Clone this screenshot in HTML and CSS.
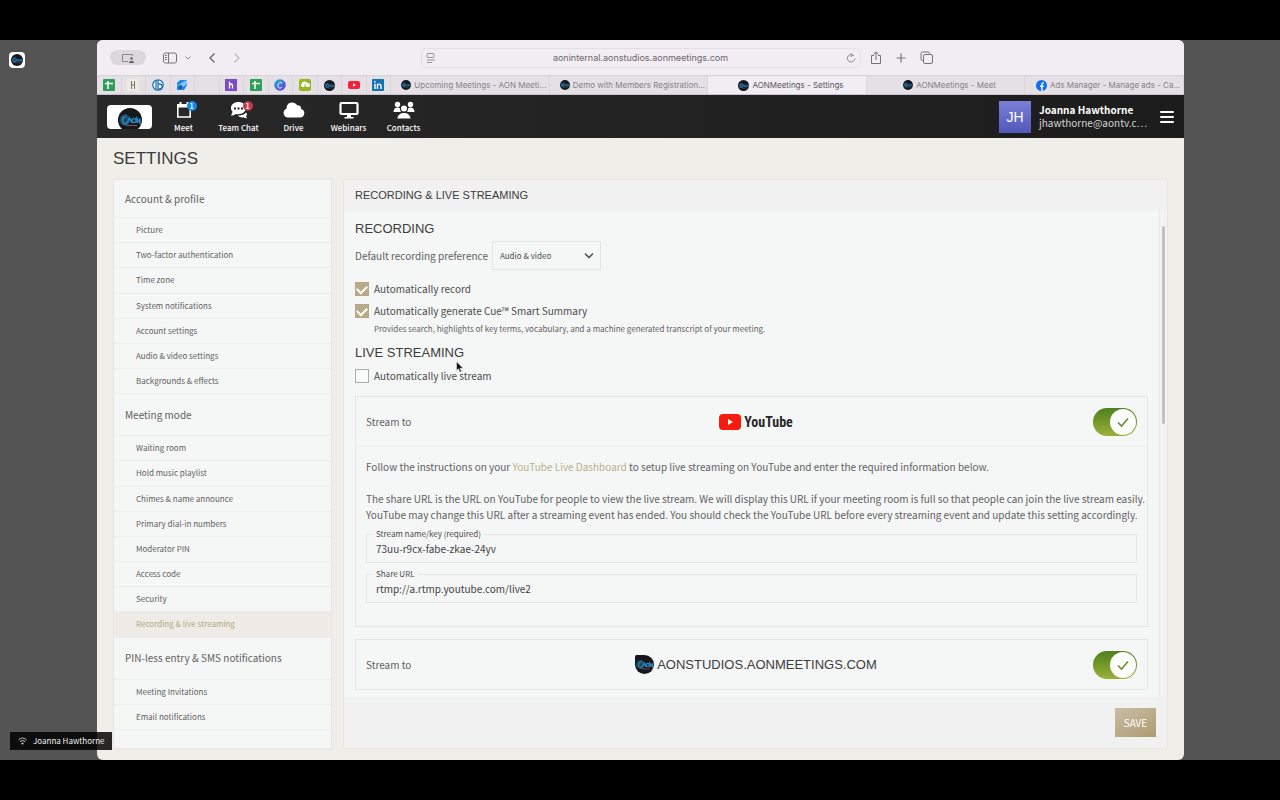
FILE: index.html
```html
<!DOCTYPE html>
<html lang="en">
<head>
  <meta charset="UTF-8" />
  <meta name="viewport" content="width=device-width, initial-scale=1.0"/>
  <title>AONMeetings - Settings</title>
  <link rel="stylesheet" href="styles.css">
</head>
<body>
  <!-- shared symbols -->
  <svg class="defs" width="0" height="0" aria-hidden="true">
    <symbol id="aon" viewBox="0 0 24 24">
      <circle cx="12" cy="12" r="12" fill="#16181b"/>
      <circle cx="7" cy="12" r="5.500" fill="#1d4560"/>
      <path d="M9 7a5 5 0 1 0 0 10M9 9.500a3 3 0 1 0 1 5" fill="none" stroke="#2b79a8" stroke-width="1.200"/>
      <path d="M9 15l2.500-5 2.500 5M14 12.500a2 2 0 1 0 4 0 2 2 0 1 0-4 0M19 15v-4.500l3 4.500v-4.500" fill="none" stroke="#2585bd" stroke-width="1.600"/>
      <path d="M9 17.500h10" stroke="#8a5648" stroke-width="1"/>
    </symbol>
    <symbol id="sheet" viewBox="0 0 12 12">
      <rect width="12" height="12" rx="1" fill="#2f9e59"/>
      <path d="M2 4.500h8M5 2v8" stroke="#fff" stroke-width="1.500"/>
    </symbol>
    <symbol id="check" viewBox="0 0 14 14">
      <path d="M2 7.500l3.500 3.500L12 3.500" fill="none" stroke="currentColor" stroke-width="1.600"/>
    </symbol>
  </svg>

  <div class="stage">
    <div class="app-badge"><svg width="12" height="12"><use href="#aon"/></svg></div>

    <div class="window">
      <!-- browser toolbar -->
      <div class="toolbar">
        <div class="tools">
          <button class="pill" aria-label="Screen sharing">
            <svg width="14" height="10" viewBox="0 0 14 10" fill="none" stroke="#8d888f"><path d="M7 8.500H1.500v-7h10V3"/><circle cx="10.500" cy="5.500" r="1.300" fill="#65616a" stroke="none"/><path d="M8 10c0-3 5-3 5 0z" fill="#65616a" stroke="none"/></svg>
          </button>
          <button aria-label="Sidebar">
            <svg width="14" height="12" viewBox="0 0 14 12" fill="none" stroke="#77727a"><rect x=".5" y="1" width="13" height="10" rx="2"/><path d="M5.500 1v10M2 3.500h2M2 5.500h2M2 7.500h2"/></svg>
          </button>
          <button class="caret" aria-label="Tab groups">
            <svg width="6" height="6" viewBox="0 0 6 6" fill="none" stroke="#8a858d"><path d="M.5 1.500L3 4l2.500-2.500"/></svg>
          </button>
          <button aria-label="Back">
            <svg width="8" height="12" viewBox="0 0 8 12" fill="none" stroke="#5f5b63" stroke-width="1.200"><path d="M6.500 1.500L2 6l4.500 4.500"/></svg>
          </button>
          <button aria-label="Forward">
            <svg width="8" height="12" viewBox="0 0 8 12" fill="none" stroke="#bbb6bd" stroke-width="1.200"><path d="M1.500 1.500L6 6l-4.500 4.500"/></svg>
          </button>
        </div>
        <div class="address">
          <svg width="10" height="10" viewBox="0 0 10 10" fill="none" stroke="#97929a"><rect x="1" y=".5" width="7" height="4" rx="1"/><path d="M1 7h8M1 9.500h5"/></svg>
          <input type="text" aria-label="Address" value="aoninternal.aonstudios.aonmeetings.com">
          <svg width="10" height="10" viewBox="0 0 10 10" fill="none" stroke="#8b868e"><path d="M8 3a3.700 3.700 0 1 0 .8 2.500M4.500.5L6.500 2 5 4"/></svg>
        </div>
        <div class="tools tools-right">
          <button aria-label="Share">
            <svg width="12" height="14" viewBox="0 0 12 14" fill="none" stroke="#77727a"><path d="M4 4.500H1.500v8h9v-8H8M6 9V1M3.500 3.300L6 1l2.500 2.300"/></svg>
          </button>
          <button aria-label="New tab">
            <svg width="12" height="12" viewBox="0 0 12 12" stroke="#77727a" stroke-width="1.200"><path d="M6 1.500v9M1.500 6h9"/></svg>
          </button>
          <button aria-label="Tab overview">
            <svg width="13" height="13" viewBox="0 0 13 13" fill="none" stroke="#77727a"><rect x="3.500" y="3.500" width="9" height="9" rx="1.500"/><path d="M3.500 9.500h-1A1.500 1.500 0 0 1 1 8V2.500A1.500 1.500 0 0 1 2.500 1H8a1.500 1.500 0 0 1 1.500 1.500v1"/></svg>
          </button>
        </div>
      </div>

      <!-- browser tabs -->
      <div class="tabs">
        <div class="pinned">
          <span><svg width="12" height="12"><use href="#sheet"/></svg></span>
          <span><svg width="12" height="12" viewBox="0 0 12 12"><rect width="12" height="12" fill="#eeece2"/><path d="M4.500 2v8M7.500 2v8M4.500 6h3" stroke="#77766c"/></svg></span>
          <span><svg width="12" height="12" viewBox="0 0 12 12"><circle cx="6" cy="6" r="5.200" fill="#fff" stroke="#1f75b5" stroke-width="1.300"/><path d="M4 1v10M6 1v9h1.500a2 2 0 0 0 0-5H6" fill="none" stroke="#1f75b5" stroke-width="1.300"/></svg></span>
          <span><svg width="12" height="12" viewBox="0 0 12 12"><path d="M1 4l3-3h7v5l-3 5H1z" fill="#2088e0"/><path d="M1 7l6-4 4-2v4L7 8z" fill="#80c8f5"/><circle cx="4.500" cy="8" r="2" fill="#1258b0"/></svg></span>
          <span></span>
          <span><svg width="12" height="12" viewBox="0 0 12 12"><rect width="12" height="12" fill="#7d4bc4"/><path d="M4.500 2.500v7M4.500 6.500c0-2 3-2 3 0v3" fill="none" stroke="#fff" stroke-width="1.300"/></svg></span>
          <span><svg width="12" height="12"><use href="#sheet"/></svg></span>
          <span><svg width="12" height="12" viewBox="0 0 12 12"><linearGradient id="cv" x1="0" x2="1" y2="1"><stop stop-color="#17b8ce"/><stop offset="1" stop-color="#7030e0"/></linearGradient><circle cx="6" cy="6" r="5.800" fill="url(#cv)"/><path d="M8 4.500c0-2-4-1.500-4 2s3 3 4 1.500" fill="none" stroke="#fff"/></svg></span>
          <span><svg width="12" height="12" viewBox="0 0 12 12"><rect width="12" height="12" rx="2" fill="#94b91f"/><path d="M3 8a2 2 0 0 1 0-3.500 3 3 0 0 1 5.500-.5A2 2 0 0 1 9.500 8z" fill="#fff"/><path d="M6 5.500V10" stroke="#94b91f" stroke-width="1.200"/></svg></span>
          <span><svg width="11" height="11"><use href="#aon"/></svg></span>
          <span><svg width="12" height="12" viewBox="0 0 12 12"><rect y="2" width="12" height="8" rx="2" fill="#f51f3c"/><path d="M5 4.300v3.400L8 6z" fill="#fff"/></svg></span>
          <span><svg width="12" height="12" viewBox="0 0 12 12"><rect width="12" height="12" rx="1" fill="#1273b3"/><path d="M3 4.800V10M3 2v1.500M5.500 4.800V10M5.500 7c0-2.500 3.500-2.500 3.500 0v3" fill="none" stroke="#fff" stroke-width="1.400"/></svg></span>
        </div>
        <a class="tab" href="#"><svg width="10" height="10"><use href="#aon"/></svg>Upcoming Meetings - AON Meeti...</a>
        <a class="tab" href="#"><svg width="10" height="10"><use href="#aon"/></svg>Demo with Members Registration...</a>
        <a class="tab active" href="#"><svg width="11" height="11"><use href="#aon"/></svg>AONMeetings - Settings</a>
        <a class="tab" href="#"><svg width="10" height="10"><use href="#aon"/></svg>AONMeetings - Meet</a>
        <a class="tab" href="#"><svg width="11" height="11" viewBox="0 0 12 12"><circle cx="6" cy="6" r="6" fill="#1270ec"/><path d="M6.500 12V5c0-1.500.5-2 2-1.800M4.500 6.800h3.700" fill="none" stroke="#fff" stroke-width="1.500"/></svg>Ads Manager - Manage ads - Ca...</a>
      </div>

      <!-- site header -->
      <header class="site-header">
        <a class="logo" href="#" aria-label="Home"><svg width="24" height="24"><use href="#aon"/></svg></a>
        <nav class="nav">
          <a href="#">
            <span class="nav-icon">
              <svg width="16" height="18" viewBox="0 0 16 18"><path d="M1.800 4h12.400v12H1.800z" fill="none" stroke="#fff" stroke-width="1.600"/><path d="M1 3h14v3.500H1zM3.500 1h2v3h-2zM10.500 1h2v3h-2z" fill="#fff"/></svg>
              <b class="count blue">1</b>
            </span>Meet
          </a>
          <a href="#">
            <span class="nav-icon">
              <svg width="18" height="18" viewBox="0 0 18 18"><path d="M8.500 1C4 1 1 3.500 1 7c0 1.500.6 2.800 1.600 3.800L1 14.500c2 0 3.500-.6 4.500-1.600 5 1.200 10.500-1.400 10.500-5.900 0-3.500-3.500-6-7.500-6z" fill="#fff"/><path d="M8 14.500c3 .2 6-.5 8-3 1.500 1.500 1 3 0 3.800l1 2c-1.500 0-2.500-.4-3.300-1.100-2.300.5-4.700 0-5.700-1.700z" fill="#fff"/><path d="M4 7.500h2M7.500 7.500h2M11 7.500h2" stroke="#262626" stroke-width="2"/></svg>
              <b class="count red">1</b>
            </span>Team Chat
          </a>
          <a href="#">
            <span class="nav-icon"><svg width="22" height="18" viewBox="0 0 22 18"><path d="M5 16.500a4.500 4.500 0 0 1-1.500-8.700C3.500 3.500 6 1.500 9 1.500c2.300 0 4 1 5 2.800 2.300-.6 4.300 1 4.200 3.600A4.400 4.400 0 0 1 17 16.500z" fill="#fff"/></svg></span>Drive
          </a>
          <a href="#">
            <span class="nav-icon"><svg width="20" height="18" viewBox="0 0 20 18"><rect x="1.500" y="2" width="17" height="11" rx="1" fill="none" stroke="#fff" stroke-width="2.200"/><path d="M8 13h4v3h2.500v1.500h-9V16H8z" fill="#fff"/></svg></span>Webinars
          </a>
          <a href="#">
            <span class="nav-icon"><svg width="22" height="18" viewBox="0 0 22 18" fill="#fff"><circle cx="4.500" cy="3.500" r="2.700"/><circle cx="17.500" cy="3.500" r="2.700"/><circle cx="11" cy="7.500" r="3"/><path d="M.5 11c0-5 5-5.500 6.500-3.500 0 1.500.3 2.300 1 3.500zM21.500 11c0-5-5-5.500-6.500-3.500 0 1.500-.3 2.300-1 3.500zM4.500 17.500c0-7.500 13-7.500 13 0z"/></svg></span>Contacts
          </a>
        </nav>
        <div class="avatar">JH</div>
        <div class="user">
          <strong>Joanna Hawthorne</strong>
          <span>jhawthorne@aontv.c…</span>
        </div>
        <button class="menu" aria-label="Menu"><i></i><i></i><i></i></button>
      </header>

      <main class="page">
        <h1>SETTINGS</h1>
        <div class="columns">
          <!-- settings menu -->
          <nav class="sidebar">
            <h2>Account &amp; profile</h2>
            <a href="#">Picture</a>
            <a href="#">Two-factor authentication</a>
            <a href="#">Time zone</a>
            <a href="#">System notifications</a>
            <a href="#">Account settings</a>
            <a href="#">Audio &amp; video settings</a>
            <a href="#">Backgrounds &amp; effects</a>
            <h2>Meeting mode</h2>
            <a href="#">Waiting room</a>
            <a href="#">Hold music playlist</a>
            <a href="#">Chimes &amp; name announce</a>
            <a href="#">Primary dial-in numbers</a>
            <a href="#">Moderator PIN</a>
            <a href="#">Access code</a>
            <a href="#">Security</a>
            <a class="current" href="#">Recording &amp; live streaming</a>
            <h2>PIN-less entry &amp; SMS notifications</h2>
            <a href="#">Meeting Invitations</a>
            <a href="#">Email notifications</a>
          </nav>

          <section class="panel">
            <h2 class="panel-title">RECORDING &amp; LIVE STREAMING</h2>
            <div class="panel-body">
              <div class="content">
                <h3>RECORDING</h3>
                <div class="preference">
                  <label for="preference">Default recording preference</label>
                  <div class="select">
                    <select id="preference"><option>Audio &amp; video</option></select>
                    <svg width="10" height="8" viewBox="0 0 10 8" fill="none" stroke="#555" stroke-width="1.600"><path d="M1 1.500l4 4 4-4"/></svg>
                  </div>
                </div>

                <label class="option"><input type="checkbox" checked>Automatically record</label>
                <label class="option"><input type="checkbox" checked>Automatically generate Cue™ Smart Summary</label>
                <p class="hint">Provides search, highlights of key terms, vocabulary, and a machine generated transcript of your meeting.</p>

                <h3>LIVE STREAMING</h3>
                <label class="option"><input type="checkbox">Automatically live stream</label>

                <!-- YouTube -->
                <div class="card">
                  <div class="card-head">
                    <span>Stream to</span>
                    <div class="brand youtube">
                      <svg width="22" height="16" viewBox="0 0 22 16"><rect width="22" height="16" rx="4" fill="#f61c0d"/><path d="M9 5v6l5-3z" fill="#fff"/></svg>
                      YouTube
                    </div>
                    <label class="toggle"><input type="checkbox" aria-label="Stream to YouTube" checked><i><svg width="14" height="14"><use href="#check"/></svg></i></label>
                  </div>
                  <div class="card-body">
                    <p>Follow the instructions on your <a href="#">YouTube Live Dashboard</a> to setup live streaming on YouTube and enter the required information below.</p>
                    <p>The share URL is the URL on YouTube for people to view the live stream. We will display this URL if your meeting room is full so that people can join the live stream easily. YouTube may change this URL after a streaming event has ended. You should check the YouTube URL before every streaming event and update this setting accordingly.</p>
                    <div class="field">
                      <label for="streamKey">Stream name/key (required)</label>
                      <input type="text" id="streamKey" value="73uu-r9cx-fabe-zkae-24yv">
                    </div>
                    <div class="field">
                      <label for="shareUrl">Share URL</label>
                      <input type="text" id="shareUrl" value="rtmp://a.rtmp.youtube.com/live2">
                    </div>
                  </div>
                </div>

                <!-- AON Studios -->
                <div class="card">
                  <div class="card-head">
                    <span>Stream to</span>
                    <div class="brand">
                      <svg width="19" height="19" viewBox="0 0 24 24"><path d="M0 2q0-2 2-2h10v12H0z" fill="#16181b"/><use href="#aon"/></svg>
                      AONSTUDIOS.AONMEETINGS.COM
                    </div>
                    <label class="toggle"><input type="checkbox" aria-label="Stream to AONSTUDIOS.AONMEETINGS.COM" checked><i><svg width="14" height="14"><use href="#check"/></svg></i></label>
                  </div>
                </div>
              </div>
              <div class="track"><div class="thumb"></div></div>
            </div>
            <div class="panel-footer"><button class="save">SAVE</button></div>
          </section>
        </div>
      </main>
    </div>

    <div class="speaker">
      <svg width="9" height="8" viewBox="0 0 9 8" fill="none" stroke="#ddd"><path d="M.5 3c2.500-2.500 5.500-2.500 8 0M2 4.700c1.500-1.500 3.500-1.500 5 0"/><circle cx="4.500" cy="6.500" r="1" fill="#ddd" stroke="none"/></svg>
      Joanna Hawthorne
    </div>
    <svg class="pointer" width="8" height="12" viewBox="0 0 8 12"><path d="M.5.5v9l2-1.700L4 11.300l1.500-.7L4 7.300h3z" fill="#111" stroke="#fff" stroke-width=".5"/></svg>
  </div>
</body>
</html>
```

FILE: styles.css
```css
* {
  box-sizing: border-box;
}

body {
  margin: 0;
  background: #000;
  color: #5f6060;
  font-family: "Noto Sans CJK SC", "Open Sans", sans-serif;
  font-size: 10px;
  line-height: 16px;
}

h1, h2, h3, p {
  margin: 0;
  font-weight: normal;
}

a {
  color: inherit;
  text-decoration: none;
}

button {
  display: flex;
  align-items: center;
  justify-content: center;
  padding: 0;
  border: 0;
  background: none;
}

input, select {
  font-family: inherit;
}

svg {
  flex: none;
}

.defs {
  position: absolute;
}

/* shared screen */
.stage {
  position: relative;
  display: flex;
  height: 100vh;
  padding: 0 96px 0 97px;
  border-top: 40px solid #000;
  border-bottom: 40px solid #000;
  background: #545454;
}

.app-badge {
  position: absolute;
  top: 12px;
  left: 9px;
  display: flex;
  padding: 2px;
  border-radius: 4px;
  background: #fff;
}

.window {
  flex: 1;
  display: flex;
  flex-direction: column;
  min-width: 0;
  overflow: hidden;
  border-radius: 6px;
  background: #f0eee9;
}

.speaker {
  position: absolute;
  left: 10px;
  bottom: 10px;
  display: flex;
  align-items: center;
  gap: 6px;
  height: 18px;
  padding: 0 8px;
  background: rgba(0, 0, 0, 0.84);
  color: #f0f0f0;
  font-size: 8px;
}

.pointer {
  position: absolute;
  top: 321px;
  left: 456px;
}

/* browser */
.toolbar {
  display: grid;
  grid-template-columns: 1fr 440px 1fr;
  align-items: center;
  height: 35px;
  background: #f2edf2;
}

.tools {
  display: flex;
  align-items: center;
  gap: 17px;
  padding-left: 13px;
}

.tools-right {
  gap: 13px;
  padding-left: 9px;
}

.pill {
  width: 36px;
  height: 15px;
  border-radius: 8px;
  background: #dcd7dc;
}

.caret {
  margin-left: -9px;
}

.address {
  display: flex;
  align-items: center;
  height: 20px;
  padding: 0 4px;
  border: 1px solid #e4dfe5;
  border-radius: 5px;
}

.address input {
  flex: 1;
  min-width: 0;
  border: 0;
  background: none;
  color: #6a666d;
  font-family: Inter, sans-serif;
  font-size: 9px;
  text-align: center;
}

.tabs {
  display: flex;
  height: 20px;
  border-top: 1px solid #d9d4da;
  border-bottom: 1px solid #c9c5ca;
  background: #e5e0e6;
  color: #858087;
  font-family: Inter, sans-serif;
  font-size: 8px;
}

.pinned {
  flex: 0 0 294px;
  display: flex;
}

.pinned span {
  flex: 1;
  display: flex;
  align-items: center;
  justify-content: center;
  border-right: 1px solid #dad5db;
}

.tab {
  flex: 1 1 0;
  display: flex;
  align-items: center;
  justify-content: center;
  gap: 3px;
  min-width: 0;
  padding-left: 8px;
  border-right: 1px solid #dad5db;
  white-space: nowrap;
}

.tab.active {
  background: #f2edf2;
  color: #5b575e;
}

/* site header */
.site-header {
  display: flex;
  align-items: center;
  height: 43px;
  padding: 0 10px;
  background: linear-gradient(90deg, #282828, #1c1c1c);
  color: #fff;
}

.logo {
  display: flex;
  justify-content: center;
  width: 45px;
  height: 24px;
  overflow: hidden;
  padding-top: 3px;
  border-radius: 4px;
  background: #fff;
}

.nav {
  flex: 1;
  display: flex;
  padding-left: 4px;
}

.nav a {
  display: flex;
  flex-direction: column;
  align-items: center;
  gap: 3px;
  width: 55px;
  padding-top: 1px;
  font-size: 8px;
  font-weight: 500;
  line-height: 12px;
}

.nav-icon {
  position: relative;
  display: flex;
}

.count {
  position: absolute;
  top: 0;
  right: -5px;
  width: 10px;
  height: 10px;
  border-radius: 5px;
  background: #1287ee;
  font-size: 7px;
  line-height: 10px;
  text-align: center;
}

.count.red {
  background: #c03a48;
}

.avatar {
  width: 32px;
  height: 32px;
  background: linear-gradient(#7b7fd6, #5257bb);
  font-family: "Liberation Sans", Arial, sans-serif;
  font-size: 14px;
  line-height: 32px;
  text-align: center;
}

.user {
  display: flex;
  flex-direction: column;
  width: 129px;
  padding: 0 0 2px 8px;
  font-size: 10px;
  line-height: 13px;
}

.user span {
  color: #d5d5d5;
}

.menu {
  flex-direction: column;
  gap: 3px;
  width: 14px;
}

.menu i {
  width: 14px;
  height: 2px;
  border-radius: 1px;
  background: #fff;
}

/* settings page */
.page {
  flex: 1;
  display: flex;
  flex-direction: column;
  min-height: 0;
  padding: 10px 16px 11px;
}

h1 {
  color: #3c3c3c;
  font-family: "Liberation Sans", Arial, sans-serif;
  font-size: 17px;
  line-height: 21px;
}

.columns {
  flex: 1;
  display: flex;
  gap: 11px;
  min-height: 0;
  margin-top: 10px;
}

.sidebar {
  flex: 0 0 219px;
  display: flex;
  flex-direction: column;
  padding-bottom: 18px;
  border: 1px solid #e9e6e2;
  background: #f5f7f7;
}

.sidebar h2 {
  display: flex;
  align-items: center;
  height: 41px;
  padding-left: 11px;
  font-size: 10px;
}

.sidebar h2:first-child {
  height: 37px;
}

.sidebar a {
  flex: 1;
  display: flex;
  align-items: center;
  padding-left: 22px;
  border-top: 1px solid #ebecec;
  font-size: 8px;
}

.sidebar a:last-child,
.sidebar a:has(+ h2) {
  border-bottom: 1px solid #ebecec;
}

.sidebar .current {
  background: #efece7;
  color: #b5a47c;
}

.panel {
  flex: 1;
  display: flex;
  flex-direction: column;
  min-width: 0;
  border: 1px solid #e9e6e2;
  background: #f1f1f1;
}

.panel-title,
h3 {
  color: #3c3c3c;
  font-family: "Liberation Sans", Arial, sans-serif;
}

.panel-title {
  padding-left: 11px;
  font-size: 11px;
  line-height: 31px;
}

.panel-body {
  flex: 1;
  display: flex;
  min-height: 0;
}

.content {
  flex: 1;
  min-width: 0;
  overflow: hidden;
  padding: 9px 11px 0;
  background: #f5f7f7;
}

h3 {
  margin-bottom: 3px;
  font-size: 13px;
  line-height: 18px;
}

.track {
  width: 8px;
  padding: 15px 2px 0;
  border-left: 1px solid #e9e9ea;
  background: #f3f3f4;
}

.thumb {
  height: 42%;
  border-radius: 2px;
  background: #c2c2c3;
}

.preference {
  display: flex;
  align-items: center;
  gap: 4px;
  margin-bottom: 8px;
}

.select {
  position: relative;
}

.select select {
  width: 109px;
  height: 29px;
  padding: 0 7px;
  border: 1px solid #e4e4e4;
  background: none;
  color: #4b4b4b;
  font-size: 8px;
  appearance: none;
}

.select svg {
  position: absolute;
  top: 11px;
  right: 7px;
}

.option {
  display: flex;
  align-items: center;
  gap: 5px;
  height: 22px;
  color: #4b4b4b;
}

.option input {
  display: grid;
  place-items: center;
  width: 14px;
  height: 14px;
  margin: 0;
  border: 1px solid #adadad;
  background: #f9fafa;
  appearance: none;
}

.option input:checked {
  border-color: #b5a888;
  background: #b9ab89;
}

.option input:checked::after {
  content: "";
  width: 8px;
  height: 5px;
  margin-bottom: 2px;
  border: solid #fff;
  border-width: 0 0 2px 2px;
  transform: rotate(-45deg);
}

.hint {
  margin-bottom: 8px;
  padding-left: 19px;
  font-size: 8px;
  line-height: 14px;
}

.card {
  margin: 9px 0 12px;
  border: 1px solid #e4e4e5;
}

.card-head {
  display: grid;
  grid-template-columns: 1fr auto 1fr;
  align-items: center;
  height: 49px;
  padding: 0 10px;
}

.brand {
  display: flex;
  align-items: center;
  gap: 3px;
  padding-left: 9px;
  color: #3c3c3c;
  font-family: "Liberation Sans", Arial, sans-serif;
  font-size: 13px;
}

.youtube {
  color: #282828;
  font-family: "Liberation Sans Narrow", "Roboto Condensed", "Noto Sans CJK SC", sans-serif;
  font-size: 14px;
  font-weight: bold;
}

.toggle {
  position: relative;
  justify-self: end;
  display: flex;
}

.toggle input {
  width: 44px;
  height: 28px;
  margin: 0;
  border-radius: 14px;
  background: linear-gradient(#4f7f1d, #9ab23a);
  appearance: none;
}

.toggle i {
  position: absolute;
  top: 1px;
  right: 1px;
  display: grid;
  place-items: center;
  width: 26px;
  height: 26px;
  border-radius: 13px;
  background: #fcfdfc;
  color: #6b8f30;
}

.card-body {
  padding: 12px 10px 23px;
  border-top: 1px solid #ededed;
}

/* long lines may run into the card's right padding */
.card-body p {
  margin: 0 -10px 16px 0;
}

.card-body p + p {
  margin-bottom: 11px;
}

.card-body p a {
  color: #bcae8c;
}

.field {
  position: relative;
  margin-top: 11px;
}

.field label {
  position: absolute;
  top: -6px;
  left: 7px;
  padding: 0 3px;
  background: #f5f7f7;
  color: #4b4b4b;
  font-size: 8px;
  line-height: 12px;
}

.field input {
  display: block;
  width: 100%;
  height: 29px;
  padding: 0 9px;
  border: 1px solid #e6e6e6;
  background: none;
  color: #3f3f3f;
  font-size: 10px;
}

.panel-footer {
  display: flex;
  align-items: center;
  justify-content: flex-end;
  height: 51px;
  padding-right: 11px;
}

.save {
  width: 41px;
  height: 29px;
  background: linear-gradient(150deg, #c8bda5, #ae9b72);
  color: #fff;
  font-family: inherit;
  font-size: 10px;
}
```
